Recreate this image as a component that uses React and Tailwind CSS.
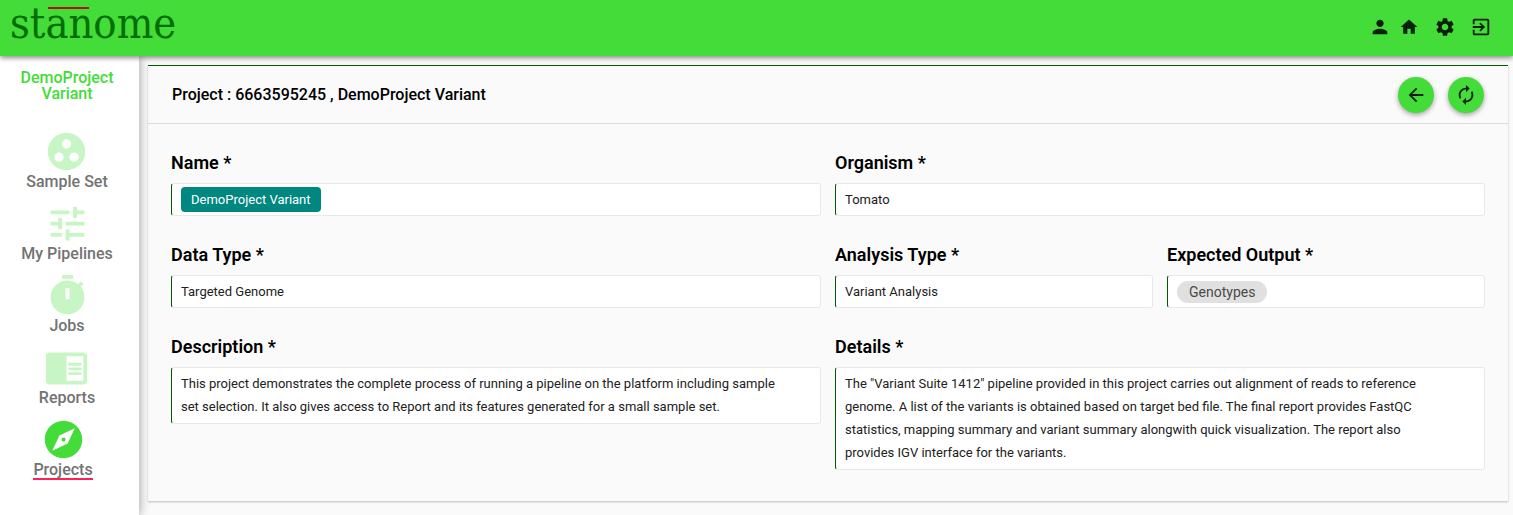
import React from 'react';
import {
  MdPerson,
  MdHome,
  MdSettings,
  MdExitToApp,
  MdArrowBack,
  MdAutorenew,
  MdGroupWork,
  MdTune,
  MdChromeReaderMode,
  MdExplore,
} from 'react-icons/md';

const navItems = [
  { label: 'Sample Set', icon: MdGroupWork },
  { label: 'My Pipelines', icon: MdTune },
  { label: 'Jobs', icon: StopwatchIcon },
  { label: 'Reports', icon: MdChromeReaderMode },
  { label: 'Projects', icon: MdExplore, active: true },
];

const description =
  'This project demonstrates the complete process of running a pipeline on the platform including sample set selection. It also gives access to Report and its features generated for a small sample set.';

const details =
  'The "Variant Suite 1412" pipeline provided in this project carries out alignment of reads to reference genome. A list of the variants is obtained based on target bed file. The final report provides FastQC statistics, mapping summary and variant summary alongwith quick visualization. The report also provides IGV interface for the variants.';

const boxClass =
  'block w-full rounded-[3px] border border-[#e8e8e8] border-l-[#005c00] bg-white pl-[9px] text-[13px] leading-[23px] text-[#212121] outline-none';

// Filled stopwatch
function StopwatchIcon({ size }) {
  return (
    <svg width={size} height={size} viewBox="0 0 24 24" fill="currentColor" fillRule="evenodd">
      <path d="M15 1H9v2h6V1zm-4 13h2V8h-2v6zm8.03-6.61l1.42-1.42c-.43-.51-.9-.99-1.41-1.41l-1.42 1.42C16.07 4.74 14.12 4 12 4c-4.97 0-9 4.03-9 9s4.02 9 9 9 9-4.03 9-9c0-2.12-.74-4.07-1.97-5.61z" />
    </svg>
  );
}

function Header() {
  return (
    <header className="relative z-20 flex h-14 items-center justify-between bg-[#43dc39] pb-[2px] pl-[10px] pr-[21px] shadow-[0_2px_5px_rgba(0,0,0,0.45)]">
      <a href="#home" className="relative -mt-2 font-['DejaVu_Serif_Condensed','DejaVu_Serif',serif] text-[43px] leading-none text-[#006e00]">
        stanome
        <span className="absolute left-[38px] top-[5px] h-[2px] w-[41px] bg-[#b50f0f]" />
      </a>
      <div className="flex items-center text-black/85">
        <button aria-label="Account" className="mr-2"><MdPerson size={22} /></button>
        <button aria-label="Home" className="mr-[15px]"><MdHome size={20} /></button>
        <button aria-label="Settings" className="mr-[14px]"><MdSettings size={22} /></button>
        <button aria-label="Log out"><MdExitToApp size={22} /></button>
      </div>
    </header>
  );
}

function Sidebar() {
  return (
    <aside className="z-10 w-[139px] shrink-0 bg-white pr-[5px] pt-[14px] text-center text-base font-medium leading-4 shadow-[0_0_10px_rgba(0,0,0,0.4)]">
      <h2 className="px-3 text-[#43dc39]">DemoProject Variant</h2>
      <nav className="mt-[27px]">
        <ul className="flex flex-col gap-[11px]">
          {navItems.map(({ label, icon: Icon, active }) => (
            <li key={label} className={active ? 'pr-2' : ''}>
              <a
                href="#nav"
                className={`inline-flex flex-col items-center align-top text-[#737373] ${active ? 'border-b-2 border-[#ff1f59]' : ''}`}
              >
                <span className={active ? 'text-[#43dc39]' : 'text-[#c7f5c4]'}>
                  <Icon size={45} />
                </span>
                {label}
              </a>
            </li>
          ))}
        </ul>
      </nav>
    </aside>
  );
}

function RoundButton({ label, children }) {
  return (
    <button
      aria-label={label}
      className="flex size-9 items-center justify-center rounded-full bg-[#43dc39] text-black/85 shadow-[0_2px_5px_rgba(0,0,0,0.35)]"
    >
      {children}
    </button>
  );
}

function Field({ id, label, className, children }) {
  return (
    <div className={className}>
      <label htmlFor={id} className="mb-2 block text-lg font-semibold leading-6 text-black">
        {label} *
      </label>
      {children}
    </div>
  );
}

function TextField({ id, label, value, className }) {
  return (
    <Field id={id} label={label} className={className}>
      <input id={id} type="text" readOnly value={value} className={`${boxClass} py-1 pr-[9px]`} />
    </Field>
  );
}

function TextAreaField({ id, label, value, rows, className }) {
  return (
    <Field id={id} label={label} className={className}>
      <textarea
        id={id}
        readOnly
        rows={rows}
        value={value}
        className={`${boxClass} resize-none overflow-hidden pb-[5px] pr-9 pt-1`}
      />
    </Field>
  );
}

export default function App() {
  return (
    <div className="flex min-h-screen flex-col bg-[#fafafa] font-[Roboto,sans-serif]">
      <Header />
      <div className="flex flex-1">
        <Sidebar />
        <main className="min-w-0 flex-1 pb-[14px] pl-[9px] pr-[5px] pt-[9px]">
          <section className="border-t border-[#005c00] bg-[#fafafa] shadow-[0_1px_2px_rgba(0,0,0,0.25)]">
            <div className="flex items-center justify-between border-b border-[#dcdcdc] px-6 pb-[10px] pt-[11px]">
              <h1 className="text-base font-medium text-black">Project : 6663595245 , DemoProject Variant</h1>
              <div className="flex gap-[14px]">
                <RoundButton label="Back"><MdArrowBack size={22} /></RoundButton>
                <RoundButton label="Refresh"><MdAutorenew size={22} /></RoundButton>
              </div>
            </div>
            <form className="grid grid-cols-4 items-start gap-x-[14px] gap-y-[27px] px-[23px] pb-[31px] pt-[27px]">
              <Field id="name" label="Name" className="col-span-2">
                <div className={`${boxClass} flex h-[33px] items-center`}>
                  <output id="name" className="rounded bg-[#008780] px-[10px] py-px text-white">
                    DemoProject Variant
                  </output>
                </div>
              </Field>
              <TextField id="organism" label="Organism" value="Tomato" className="col-span-2" />
              <TextField id="data-type" label="Data Type" value="Targeted Genome" className="col-span-2" />
              <TextField id="analysis-type" label="Analysis Type" value="Variant Analysis" />
              <Field id="output" label="Expected Output">
                <div className={`${boxClass} flex h-[33px] items-center`}>
                  <output id="output" className="rounded-full bg-[#e0e0e0] px-3 text-sm leading-[22px] text-[#4a4a4a]">
                    Genotypes
                  </output>
                </div>
              </Field>
              <TextAreaField id="description" label="Description" rows={2} value={description} className="col-span-2" />
              <TextAreaField id="details" label="Details" rows={4} value={details} className="col-span-2" />
            </form>
          </section>
        </main>
      </div>
    </div>
  );
}
